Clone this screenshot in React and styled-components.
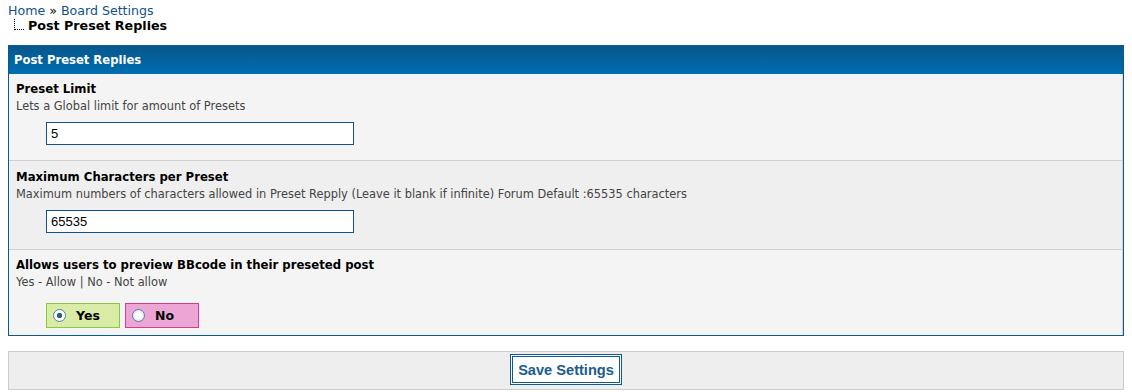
import React from 'react'
import styled, { createGlobalStyle } from 'styled-components'

const Global = createGlobalStyle`
  body {
    margin: 0 8px;
    background: #fff;
    font-family: "DejaVu Sans", Verdana, sans-serif;
    color: #000;
  }
`

const Crumbs = styled.div`
  padding-top: 3px;
  font-size: 12.6px;
  line-height: 15px;
`

const CrumbLink = styled.a`
  color: #105289;
  text-decoration: none;
`

const CrumbCurrent = styled.div`
  display: flex;
  align-items: flex-start;
  font-weight: bold;
  font-size: 12.7px;
`

const Tree = styled.span`
  display: inline-block;
  width: 9px;
  height: 10px;
  margin: 1px 4px 0 6px;
  border-left: 1px dotted #000;
  border-bottom: 1px dotted #000;
`

const Panel = styled.section`
  margin-top: 12px;
  border: 1px solid #0b5a8c;
`

const PanelHead = styled.h2`
  margin: 0;
  height: 28px;
  padding: 0 5px;
  display: flex;
  align-items: center;
  font-size: 11.6px;
  font-weight: bold;
  color: #fff;
  background: linear-gradient(to bottom, #07578a, #006db2);
`

const Row = styled.div`
  padding: ${p => p.$top}px 8px ${p => p.$bottom}px 7px;
  background: ${p => (p.$alt ? '#efefef' : '#f4f4f4')};
  border-right: 1px solid #d4d4d4;
  border-top: ${p => (p.$first ? 'none' : '1px solid #d0d0d0')};
`

const Title = styled.div`
  font-size: 11.7px;
  line-height: 16px;
  font-weight: bold;
`

const Desc = styled.div`
  margin-top: 2px;
  font-size: 11.4px;
  line-height: 14px;
  color: #444;
`

const Field = styled.input`
  display: block;
  box-sizing: border-box;
  width: 308px;
  height: 23px;
  margin: 9px 0 0 30px;
  padding: 0 4px;
  border: 1px solid #105289;
  font-family: "Liberation Sans", Arial, sans-serif;
  font-size: 13px;
  color: #000;
  background: #fff;
`

const Choices = styled.div`
  display: flex;
  gap: 5px;
  margin: 14px 0 0 30px;
`

const Choice = styled.label`
  box-sizing: border-box;
  width: 74px;
  height: 25px;
  display: flex;
  align-items: center;
  gap: 10px;
  padding-left: 6px;
  font-size: 12.5px;
  font-weight: bold;
  background: ${p => (p.$yes ? '#d9eca6' : '#eca6d6')};
  border: 1px solid ${p => (p.$yes ? '#8dc63f' : '#d13f8e')};
`

const Radio = styled.span`
  box-sizing: border-box;
  width: 13px;
  height: 13px;
  border-radius: 50%;
  border: 1px solid #5a7fa3;
  background: radial-gradient(circle, ${p => (p.$on ? '#2a5f92 0 2.5px, #fff 3px' : '#fff 0 3px, #e4eaf0 5px')});
`

const SaveBar = styled.div`
  margin-top: 15px;
  display: flex;
  justify-content: center;
  padding: 2px 0 4px;
  background: #eeeeee;
  border: 1px solid #cccccc;
`

const SaveButton = styled.button`
  height: 31px;
  padding: 0 5px;
  border: 3px double #0f5a8f;
  background: #fdfdfd;
  color: #1b5c8e;
  font-family: "Liberation Sans", Arial, sans-serif;
  font-size: 14.6px;
  font-weight: bold;
`

export default function App() {
  return (
    <>
      <Global />
      <Crumbs>
        <CrumbLink href="#">Home</CrumbLink> » <CrumbLink href="#">Board Settings</CrumbLink>
        <CrumbCurrent>
          <Tree />
          Post Preset Replies
        </CrumbCurrent>
      </Crumbs>

      <Panel>
        <PanelHead>Post Preset Replies</PanelHead>
        <Row $first $top={7} $bottom={15}>
          <Title>Preset Limit</Title>
          <Desc>Lets a Global limit for amount of Presets</Desc>
          <Field defaultValue="5" />
        </Row>
        <Row $alt $top={8} $bottom={16}>
          <Title>Maximum Characters per Preset</Title>
          <Desc>Maximum numbers of characters allowed in Preset Repply (Leave it blank if infinite) Forum Default :65535 characters</Desc>
          <Field defaultValue="65535" />
        </Row>
        <Row $top={7} $bottom={7}>
          <Title>Allows users to preview BBcode in their preseted post</Title>
          <Desc>Yes - Allow | No - Not allow</Desc>
          <Choices>
            <Choice $yes><Radio $on />Yes</Choice>
            <Choice><Radio />No</Choice>
          </Choices>
        </Row>
      </Panel>

      <SaveBar>
        <SaveButton>Save Settings</SaveButton>
      </SaveBar>
    </>
  )
}
